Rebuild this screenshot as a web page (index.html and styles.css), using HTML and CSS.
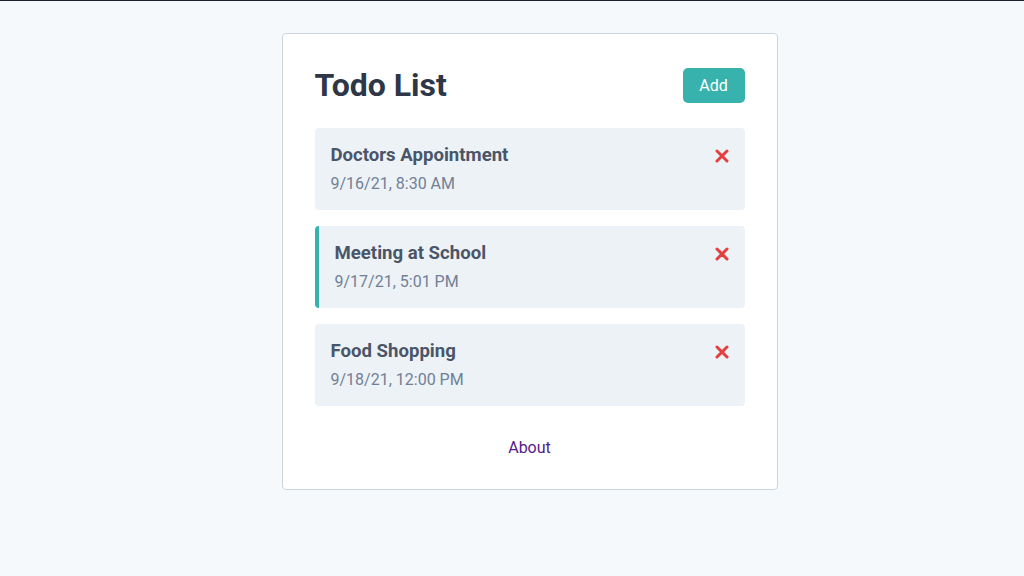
FILE: index.html
```html
<!DOCTYPE html>
<html lang="en">
<head>
<meta charset="utf-8">
<title>Todo List</title>
<link rel="stylesheet" href="styles.css">
</head>
<body>
<div class="page">
  <div class="card">
    <header class="header">
      <h1 class="title">Todo List</h1>
      <button class="btn">Add</button>
    </header>
    <div class="tasks">
      <div class="task">
        <div class="task-row">
          <h3 class="task-name">Doctors Appointment</h3>
          <svg class="del" viewBox="0 0 14 14" width="14" height="14"><path d="M2 2 L12 12 M12 2 L2 12" stroke="#e53e3e" stroke-width="3" stroke-linecap="round"/></svg>
        </div>
        <p class="task-date">9/16/21, 8:30 AM</p>
      </div>
      <div class="task reminder">
        <div class="task-row">
          <h3 class="task-name">Meeting at School</h3>
          <svg class="del" viewBox="0 0 14 14" width="14" height="14"><path d="M2 2 L12 12 M12 2 L2 12" stroke="#e53e3e" stroke-width="3" stroke-linecap="round"/></svg>
        </div>
        <p class="task-date">9/17/21, 5:01 PM</p>
      </div>
      <div class="task">
        <div class="task-row">
          <h3 class="task-name">Food Shopping</h3>
          <svg class="del" viewBox="0 0 14 14" width="14" height="14"><path d="M2 2 L12 12 M12 2 L2 12" stroke="#e53e3e" stroke-width="3" stroke-linecap="round"/></svg>
        </div>
        <p class="task-date">9/18/21, 12:00 PM</p>
      </div>
    </div>
    <footer class="footer">
      <a class="about" href="#about">About</a>
    </footer>
  </div>
</div>
</body>
</html>
```
FILE: styles.css
```css
* { box-sizing: border-box; }
html, body { margin: 0; padding: 0; }
body {
  background: #f5f9fc;
  font-family: Roboto, "Liberation Sans", Arial, sans-serif;
  border-top: 1px solid #1a202c;
  min-height: 576px;
}
.page {
  display: flex;
  justify-content: center;
  padding: 32px 0 0 35px;
}
.card {
  width: 496px;
  background: #ffffff;
  border: 1px solid #cbd5e0;
  border-radius: 4px;
  padding: 32px 32px 29px;
}
.header {
  display: flex;
  justify-content: space-between;
  align-items: center;
  height: 38px;
  margin-bottom: 24px;
}
.title {
  margin: 0;
  font-size: 32px;
  font-weight: 700;
  color: #2d3748;
  line-height: 38px;
}
.btn {
  background: #38b2ac;
  color: #ffffff;
  border: none;
  border-radius: 5px;
  width: 62px;
  height: 35px;
  font-family: inherit;
  font-size: 16px;
  padding: 0;
  margin-top: 1px;
}
.tasks {
  display: flex;
  flex-direction: column;
  gap: 16px;
}
.task {
  background: #edf2f7;
  border-radius: 4px;
  padding: 14px 16px 14px;
  height: 82px;
}
.task.reminder {
  border-left: 4px solid #38b2ac;
  padding-left: 16px;
}
.task-row {
  display: flex;
  justify-content: space-between;
  align-items: center;
  height: 27px;
}
.task-name {
  margin: 0;
  font-size: 18.6px;
  font-weight: 700;
  color: #4a5568;
  line-height: 27px;
}
.del { display: block; }
.task-date {
  margin: 3px 0 0;
  font-size: 16px;
  line-height: 24px;
  color: #718096;
}
.footer {
  margin-top: 30px;
  text-align: center;
  line-height: 24px;
  font-size: 16px;
}
.about {
  color: #551a8b;
  text-decoration: none;
}
```
